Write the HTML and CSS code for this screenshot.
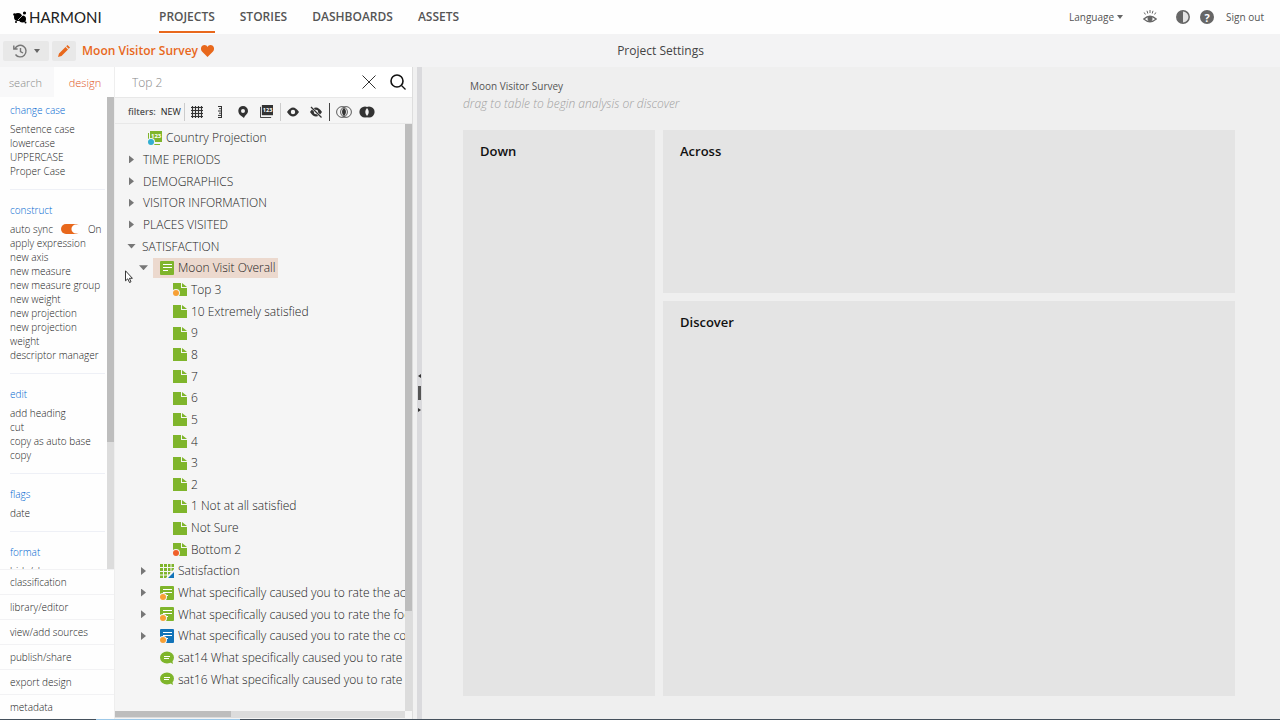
FILE: index.html
```
<!DOCTYPE html>
<html lang="en">
<head>
    <meta charset="UTF-8">
    <title>Harmoni - Moon Visitor Survey</title>
    <link rel="stylesheet" href="styles.css">
</head>
<body>
<!-- shared icons -->
<svg class="sprite" aria-hidden="true">
    <symbol id="i-file" viewBox="0 0 14 14"><path fill="#7fb52b" d="M0 1h8v5h6v8H0z"/><path fill="#7fb52b" d="M9 1l5 4H9z"/></symbol>
    <symbol id="i-form" viewBox="0 0 14 14"><rect width="14" height="14" rx="1" fill="currentColor"/><path stroke="#fff" d="M3 3.5h9M3 6.5h9M3 9.5h5"/></symbol>
    <symbol id="i-chat" viewBox="0 0 14 14"><ellipse cx="7" cy="6.5" rx="7" ry="6" fill="#7fb52b"/><path fill="#7fb52b" d="M8 10l5 3-1-5z"/><path stroke="#fff" d="M4 5.5h6M4 7.5h5"/></symbol>
    <symbol id="i-grid" viewBox="0 0 14 14"><path fill="#7fb52b" d="M0 0h14v14H0z"/><path stroke="#f5f5f5" d="M3.5 0v14M7.5 0v14M11 0v14M0 3.5h14M0 7.5h14M0 11h14"/><path fill="#f5f5f5" d="M14 5v9H6z"/><path fill="#1273b8" d="M14 8v6H8z"/></symbol>
    <symbol id="i-num" viewBox="0 0 14 14"><path fill="currentColor" d="M2 0h12v11H2z"/><path fill="none" stroke="currentColor" d="M.5 2v11.5H12"/><text x="3" y="7" font-size="6" font-weight="700" fill="#fff">123</text></symbol>
</svg>

<header class="topbar">
    <a class="logo" href="#">
        <svg width="14" height="13" viewBox="0 0 14 13"><circle cx="5" cy="6" r="4"/><circle cx="9.500" cy="8" r="3.500"/><circle cx="1.500" cy="3.500" r="1.300"/><circle cx="11.500" cy="2" r="1.600"/><circle cx="3" cy="11" r="1"/><circle cx="12.500" cy="11.500" r="1"/><path d="M5 9l5-5" stroke="#fff" stroke-width=".7"/></svg>
        <span>HARMONI</span>
    </a>
    <nav class="main-nav">
        <a class="active" href="#">PROJECTS</a>
        <a href="#">STORIES</a>
        <a href="#">DASHBOARDS</a>
        <a href="#">ASSETS</a>
    </nav>
    <div class="user-nav">
        <button class="language">Language <i class="caret"></i></button>
        <button class="watch" aria-label="Preview"><svg width="14" height="14" viewBox="0 0 14 14"><path d="M.8 9Q7 3.500 13.200 9 7 14.500.8 9z" fill="none" stroke="#666" stroke-width="1.300"/><circle cx="7" cy="8.800" r="2.500" fill="#666"/><path d="M7 0v3M4 .8l.8 2.700M10 .8l-.8 2.700M1.200 2.500l1.200 2M12.800 2.500l-1.200 2" stroke="#666"/></svg></button>
        <button class="contrast" aria-label="Contrast"><svg width="14" height="14" viewBox="0 0 14 14"><circle cx="7" cy="7" r="6.200" fill="#e4e4e4" stroke="#666" stroke-width="1.500"/><path d="M7 1a6 6 0 0 0 0 12z" fill="#666"/></svg></button>
        <button class="help" aria-label="Help">?</button>
        <a href="#">Sign out</a>
    </div>
</header>

<div class="projectbar">
    <button class="history" aria-label="History"><svg width="14" height="14" viewBox="0 0 14 14"><path d="M2 4.500A5.800 5.800 0 1 1 2.500 10.500M.8 1.500V5h3.800M7.500 4v3.500l2.500 1.500" fill="none" stroke="#777" stroke-width="1.400"/></svg><i class="caret"></i></button>
    <button class="edit" aria-label="Edit"><svg width="12" height="12" viewBox="0 0 12 12"><path fill="#e8681c" d="M0 12l1-3.500L7.500 2 10 4.500 3.500 11zM8.200 1.300L9.500 0 12 2.500l-1.300 1.300z"/></svg></button>
    <h1>Moon Visitor Survey</h1>
    <svg class="heart" width="13" height="12" viewBox="0 0 13 12"><path fill="#e8681c" d="M6.500 12L1 6.500C-1.500 3 1 0 3.500 0 5 0 6 .8 6.500 2 7 .8 8 0 9.500 0 12 0 14.500 3 12 6.500z"/></svg>
    <h2>Project Settings</h2>
</div>

<div class="workspace">
    <aside class="sidebar">
        <div class="tabs">
            <button>search</button>
            <button class="active">design</button>
        </div>
        <div class="commands">
            <div class="command-list">
                <section>
                    <h3>change case</h3>
                    <a href="#">Sentence case</a>
                    <a href="#">lowercase</a>
                    <a href="#">UPPERCASE</a>
                    <a href="#">Proper Case</a>
                </section>
                <section>
                    <h3>construct</h3>
                    <label class="sync">auto sync <input type="checkbox" checked> <span>On</span></label>
                    <a href="#">apply expression</a>
                    <a href="#">new axis</a>
                    <a href="#">new measure</a>
                    <a href="#">new measure group</a>
                    <a href="#">new weight</a>
                    <a href="#">new projection</a>
                    <a href="#">new projection<br>weight</a>
                    <a href="#">descriptor manager</a>
                </section>
                <section>
                    <h3>edit</h3>
                    <a href="#">add heading</a>
                    <a href="#">cut</a>
                    <a href="#">copy as auto base</a>
                    <a href="#">copy</a>
                </section>
                <section>
                    <h3>flags</h3>
                    <a href="#">date</a>
                </section>
                <section>
                    <h3>format</h3>
                    <a href="#">hide/show</a>
                </section>
            </div>
            <div class="scroll-y"><i></i></div>
        </div>
        <nav class="links">
            <a href="#">classification</a>
            <a href="#">library/editor</a>
            <a href="#">view/add sources</a>
            <a href="#">publish/share</a>
            <a href="#">export design</a>
            <a href="#">metadata</a>
        </nav>
    </aside>

    <div class="tree-panel">
        <div class="search">
            <input type="text" placeholder="Top 2" aria-label="Search variables">
            <button aria-label="Clear"><svg width="14" height="14" viewBox="0 0 14 14"><path d="M.5.5l13 13M13.500.5l-13 13" stroke="#333"/></svg></button>
            <button aria-label="Search"><svg width="16" height="16" viewBox="0 0 16 16"><circle cx="7" cy="7" r="6" fill="none" stroke="#111" stroke-width="1.600"/><path d="M11.500 11.500l4 4" stroke="#111" stroke-width="1.300"/></svg></button>
        </div>
        <div class="filters">
            <b>filters:</b>
            <button class="new">NEW</button>
            <i class="sep first"></i>
            <button aria-label="Grid"><svg width="12" height="12" viewBox="0 0 12 12"><path d="M1.500 0v12M4.500 0v12M7.500 0v12M10.500 0v12M0 1.500h12M0 4.500h12M0 7.500h12M0 10.500h12" stroke="#333" stroke-width="1.200"/></svg></button>
            <button aria-label="Measure"><svg width="12" height="12" viewBox="0 0 12 12"><path d="M7.500 0v12M4 .5h4M5 2.700h3M4 5h4M5 7.200h3M4 9.400h4M4 11.500h4" stroke="#333"/></svg></button>
            <button aria-label="Location"><svg width="12" height="12" viewBox="0 0 12 12"><path fill="#333" fill-rule="evenodd" d="M6 0a5 5 0 0 1 5 5c0 3-3 4-4 7L3 9C0 6 1 0 6 0zm0 3a2 2 0 1 0 0 4 2 2 0 0 0 0-4z"/></svg></button>
            <button class="dark" aria-label="Numeric"><svg width="13" height="13"><use href="#i-num"/></svg></button>
            <i class="sep"></i>
            <button aria-label="Show"><svg width="12" height="12" viewBox="0 0 12 12"><path fill="#333" fill-rule="evenodd" d="M0 6q6-9 12 0-6 9-12 0zm6-2.200a2.200 2.200 0 1 0 0 4.400 2.200 2.200 0 0 0 0-4.400z"/></svg></button>
            <button aria-label="Hide"><svg width="12" height="12" viewBox="0 0 12 12"><path fill="#333" fill-rule="evenodd" d="M0 6q6-9 12 0-6 9-12 0zm6-2.200a2.200 2.200 0 1 0 0 4.400 2.200 2.200 0 0 0 0-4.400z"/><path d="M1 1l10.500 10.500" stroke="#f4f4f4" stroke-width="2.400"/><path d="M1 1l10.500 10.500" stroke="#333" stroke-width="1.200"/></svg></button>
            <i class="sep strong"></i>
            <button class="venn" aria-label="Intersect"><svg width="16" height="12" viewBox="0 0 16 12"><path fill="#333" d="M8 1.500q4 4.500 0 9-4-4.500 0-9z"/><circle cx="6" cy="6" r="5.400" fill="none" stroke="#333" stroke-width=".8"/><circle cx="10" cy="6" r="5.400" fill="none" stroke="#333" stroke-width=".8"/></svg></button>
            <button class="venn" aria-label="Exclude"><svg width="16" height="12" viewBox="0 0 16 12"><circle cx="6" cy="6" r="5.600" fill="#333"/><circle cx="10" cy="6" r="5.600" fill="#333"/><path fill="#f4f4f4" d="M8 2q3.500 4 0 8-3.500-4 0-8z"/></svg></button>
        </div>
        <div class="tree-body">
            <ul class="tree">
                <li class="lead green"><svg><use href="#i-num"/></svg><i class="dot blue"></i>Country Projection</li>
                <li><i class="arrow"></i>TIME PERIODS</li>
                <li><i class="arrow"></i>DEMOGRAPHICS</li>
                <li><i class="arrow"></i>VISITOR INFORMATION</li>
                <li><i class="arrow"></i>PLACES VISITED</li>
                <li><i class="arrow open"></i>SATISFACTION</li>
                <li class="l2 green"><i class="arrow open"></i><span class="selected"><svg><use href="#i-form"/></svg>Moon Visit Overall</span></li>
                <li class="l3"><svg><use href="#i-file"/></svg><i class="dot"></i>Top 3</li>
                <li class="l3"><svg><use href="#i-file"/></svg>10 Extremely satisfied</li>
                <li class="l3"><svg><use href="#i-file"/></svg>9</li>
                <li class="l3"><svg><use href="#i-file"/></svg>8</li>
                <li class="l3"><svg><use href="#i-file"/></svg>7</li>
                <li class="l3"><svg><use href="#i-file"/></svg>6</li>
                <li class="l3"><svg><use href="#i-file"/></svg>5</li>
                <li class="l3"><svg><use href="#i-file"/></svg>4</li>
                <li class="l3"><svg><use href="#i-file"/></svg>3</li>
                <li class="l3"><svg><use href="#i-file"/></svg>2</li>
                <li class="l3"><svg><use href="#i-file"/></svg>1 Not at all satisfied</li>
                <li class="l3"><svg><use href="#i-file"/></svg>Not Sure</li>
                <li class="l3"><svg><use href="#i-file"/></svg><i class="dot red"></i>Bottom 2</li>
                <li class="l2"><i class="arrow"></i><svg><use href="#i-grid"/></svg>Satisfaction</li>
                <li class="l2 green"><i class="arrow"></i><svg><use href="#i-form"/></svg><i class="dot"></i>What specifically caused you to rate the accommodation</li>
                <li class="l2 green"><i class="arrow"></i><svg><use href="#i-form"/></svg><i class="dot"></i>What specifically caused you to rate the food</li>
                <li class="l2 navy"><i class="arrow"></i><svg><use href="#i-form"/></svg><i class="dot"></i>What specifically caused you to rate the cost</li>
                <li class="l2"><i class="arrow none"></i><svg><use href="#i-chat"/></svg>sat14 What specifically caused you to rate the</li>
                <li class="l2"><i class="arrow none"></i><svg><use href="#i-chat"/></svg>sat16 What specifically caused you to rate the</li>
            </ul>
            <div class="scroll-y"><i></i></div>
        </div>
        <div class="scroll-x"><i></i></div>
        <svg class="cursor" width="8" height="13" viewBox="0 0 8 13"><path fill="#fff" stroke="#222" stroke-width=".9" d="M.5.800v10l2.300-2 1.700 3.700 1.500-.7-1.600-3.500h3z"/></svg>
    </div>

    <div class="splitter"><i class="left"></i><i class="grip"></i><i class="right"></i></div>

    <main class="canvas">
        <p class="title">Moon Visitor Survey</p>
        <p class="hint">drag to table to begin analysis or discover</p>
        <div class="zones">
            <section class="down"><h4>Down</h4></section>
            <section class="across"><h4>Across</h4></section>
            <section class="discover"><h4>Discover</h4></section>
        </div>
    </main>
</div>
<footer class="taskbar"></footer>
</body>
</html>
```
FILE: styles.css
```
* {
    box-sizing: border-box;
}

body {
    margin: 0;
    height: 100vh;
    display: flex;
    flex-direction: column;
    overflow: hidden;
    font-family: "Open Sans", "Noto Sans", sans-serif;
    font-size: 10px;
    color: #555;
    background: #fefefe;
}

h1, h2, h3, h4, p, ul {
    margin: 0;
    padding: 0;
}

a {
    color: inherit;
    text-decoration: none;
}

button {
    display: flex;
    align-items: center;
    justify-content: center;
    padding: 0;
    border: none;
    background: none;
    font: inherit;
    color: inherit;
    cursor: pointer;
}

svg {
    flex-shrink: 0;
}

.sprite {
    position: absolute;
    width: 0;
    height: 0;
}

.caret {
    border: 3px solid transparent;
    border-top: 4px solid #666;
    border-bottom: 0;
}

/* top bar */
.topbar {
    display: flex;
    height: 34px;
    flex-shrink: 0;
    padding: 0 16px 0 13px;
}

.logo {
    display: flex;
    align-items: center;
    gap: 2px;
    width: 146px;
    font-family: Lato, sans-serif;
    font-size: 15px;
    color: #222;
}

.main-nav {
    display: flex;
    gap: 25px;
    font-size: 12px;
    font-weight: 600;
    line-height: 34px;
    color: #555;
}

.main-nav .active {
    border-bottom: 2px solid #e8681c;
    height: 33px;
}

.user-nav {
    display: flex;
    align-items: center;
    margin-left: auto;
    font-weight: 500;
}

.language {
    gap: 3px;
}

.watch {
    margin-left: 20px;
}

.contrast {
    margin-left: 19px;
}

.help {
    width: 14px;
    height: 14px;
    margin: 0 12px 0 10px;
    border-radius: 50%;
    background: #666;
    color: #fff;
    font-size: 11px;
    font-weight: 700;
}

/* project bar */
.projectbar {
    display: flex;
    align-items: center;
    height: 33px;
    flex-shrink: 0;
    padding-left: 3px;
    background: #f3f3f4;
    position: relative;
}

.history, .edit {
    height: 20px;
    border-radius: 2px;
    background: #e8e8e8;
}

.history {
    width: 46px;
    gap: 7px;
    margin-right: 3px;
}

.edit {
    width: 24px;
    margin-right: 6px;
}

.projectbar h1 {
    font-size: 12px;
    font-weight: 600;
    color: #e8681c;
}

.heart {
    margin-left: 3px;
}

.projectbar h2 {
    position: absolute;
    left: 0;
    right: 0;
    text-align: center;
    padding-left: 41px;
    font-size: 12px;
    font-weight: 500;
    color: #444;
    pointer-events: none;
}

.workspace {
    display: flex;
    flex: 1;
    min-height: 0;
}

/* left side */
.sidebar {
    width: 114px;
    flex-shrink: 0;
    display: flex;
    flex-direction: column;
    font-weight: 300;
    color: #222;
}

.tabs {
    display: flex;
    height: 30px;
    font-size: 11px;
}

.tabs button {
    width: 54px;
    padding-right: 3px;
    background: #f8f8f9;
    color: #888;
}

.tabs .active {
    flex: 1;
    padding: 0 0 0 2px;
    background: none;
    color: #e0551c;
}

.commands {
    display: flex;
    flex: 1;
    min-height: 0;
}

.command-list {
    flex: 1;
    padding: 0 2px 0 10px;
    overflow: hidden;
    line-height: 14px;
}

.command-list section {
    padding: 11px 0;
    border-bottom: 1px solid #eef0f6;
}

.command-list section:first-child {
    padding-top: 4px;
}

.command-list h3 {
    margin-bottom: 3px;
    font-size: 10px;
    font-weight: inherit;
    line-height: 18px;
    color: #0066d0;
}

.command-list a {
    display: block;
    white-space: nowrap;
}

.sync {
    display: flex;
    align-items: center;
}

.sync input {
    appearance: none;
    width: 20px;
    height: 10px;
    margin: 0 7px 0 8px;
    border-radius: 5px;
    background: radial-gradient(circle at 15px 5px, #fff 4px, transparent 5px), #e8681c;
    border-right: 2px solid #fff;
}

.scroll-y {
    width: 7px;
    flex-shrink: 0;
    background: #dcdcdc;
}

.scroll-y i {
    display: block;
    height: 73%;
    background: #bdbdbd;
}

.links a {
    display: block;
    height: 25px;
    padding-left: 10px;
    line-height: 25px;
    border-top: 1px solid #f2f2f4;
}

/* variables tree */
.tree-panel {
    position: relative;
    width: 299px;
    flex-shrink: 0;
    display: flex;
    flex-direction: column;
    background: #f5f5f5;
    border-left: 1px solid #eee;
    border-right: 1px solid #ddd;
}

.search {
    display: flex;
    align-items: center;
    gap: 14px;
    height: 30px;
    padding: 0 6px 0 17px;
    background: #fff;
}

.search input {
    flex: 1;
    min-width: 0;
    padding: 0;
    border: none;
    outline: none;
    font: inherit;
    font-size: 12px;
    font-weight: 300;
}

.search input::placeholder {
    color: #888;
}

.filters {
    display: flex;
    align-items: center;
    height: 27px;
    padding: 2px 0 0 13px;
    border-top: 1px solid #e8e8e8;
    border-bottom: 1px solid #e8e8e8;
    font-size: 9px;
}

.filters b {
    font-weight: 600;
}

.filters button {
    margin-right: 11px;
}

.filters .new {
    margin: 0 3px 0 5px;
    color: #222;
}

.filters .dark {
    color: #333;
}

.filters .venn {
    margin-right: 7px;
}

.sep {
    width: 1px;
    height: 18px;
    margin: 0 6px 0 -4px;
    background: #ccc;
}

.sep.first {
    margin-left: 0;
}

.sep.strong {
    background: #444;
}

.tree-body {
    display: flex;
    flex: 1;
    min-height: 0;
}

.tree {
    flex: 1;
    min-width: 0;
    display: flex;
    flex-direction: column;
    padding: 3px 0 21px;
    overflow: hidden;
    list-style: none;
    font-size: 12px;
    font-weight: 300;
    color: #222;
}

.tree li {
    display: flex;
    align-items: center;
    flex: 1;
    padding-left: 14px;
    white-space: nowrap;
}

.tree svg {
    width: 14px;
    height: 14px;
    margin-right: 4px;
}

.tree .lead {
    padding-left: 33px;
}

.tree .l2 {
    padding-left: 26px;
}

.tree .l3 {
    padding-left: 58px;
}

.green svg {
    color: #7fb52b;
}

.navy svg {
    color: #1273b8;
}

.arrow {
    width: 5px;
    height: 8px;
    flex-shrink: 0;
    margin-right: 9px;
    background: #777;
    clip-path: polygon(0 0, 100% 50%, 0 100%);
}

.arrow.open {
    width: 9px;
    height: 5px;
    margin: 0 6px 0 -2px;
    clip-path: polygon(0 0, 100% 0, 50% 100%);
}

.l2 .arrow {
    margin-right: 14px;
}

.l2 .arrow.open {
    margin-right: 5px;
}

.arrow.none {
    background: none;
}

.selected {
    display: flex;
    align-items: center;
    height: 20px;
    padding: 0 3px 0 7px;
    background: #ecd9ce;
}

/* status dot over the icon corner */
.dot {
    position: relative;
    width: 6px;
    height: 6px;
    flex-shrink: 0;
    margin: 8px 12px 0 -18px;
    border-radius: 50%;
    background: #f7a035;
    box-shadow: 0 0 0 1px #f5f5f5;
}

.dot.red {
    background: #f0602a;
}

.dot.blue {
    background: #32aed0;
}

.tree-body .scroll-y i {
    height: 83%;
}

.scroll-x {
    height: 7px;
    margin: 0 7px 1px 0;
    background: #dcdcdc;
}

.scroll-x i {
    display: block;
    width: 40%;
    height: 6px;
    background: #bdbdbd;
}

.cursor {
    position: absolute;
    left: 10px;
    top: 203px;
}

/* splitter */
.splitter {
    width: 9px;
    flex-shrink: 0;
    display: flex;
    flex-direction: column;
    align-items: center;
    justify-content: center;
    gap: 8px;
    padding-left: 4px;
    background: linear-gradient(90deg, #f1f1f1 4px, #dadadd 4px);
}

.splitter .left {
    border: 2px solid transparent;
    border-left: 0;
    border-right: 3px solid #333;
}

.splitter .right {
    border: 2px solid transparent;
    border-right: 0;
    border-left: 3px solid #333;
}

.splitter .grip {
    width: 3px;
    height: 14px;
    background: #555;
}

/* analysis area */
.canvas {
    flex: 1;
    display: flex;
    flex-direction: column;
    padding: 11px 45px 23px 41px;
    background: #efefef;
}

.canvas .title {
    padding-left: 7px;
    line-height: 16px;
    font-size: 10px;
}

.canvas .hint {
    margin-bottom: 16px;
    line-height: 20px;
    font-size: 12px;
    font-weight: 300;
    font-style: italic;
    color: #a0a0a0;
}

.zones {
    flex: 1;
    display: grid;
    grid-template-columns: 192fr 572fr;
    grid-template-rows: 163fr 395fr;
    gap: 8px;
}

.zones section {
    padding: 12px 17px;
    background: #e4e4e4;
}

.zones .down {
    grid-row: span 2;
}

.zones h4 {
    font-size: 13px;
    font-weight: 600;
    line-height: 18px;
    color: #111;
}

.taskbar {
    height: 1px;
    background: linear-gradient(90deg, #44505c 96px, #9cc8e8 96px, #9cc8e8 240px, #44505c 240px);
}
```
